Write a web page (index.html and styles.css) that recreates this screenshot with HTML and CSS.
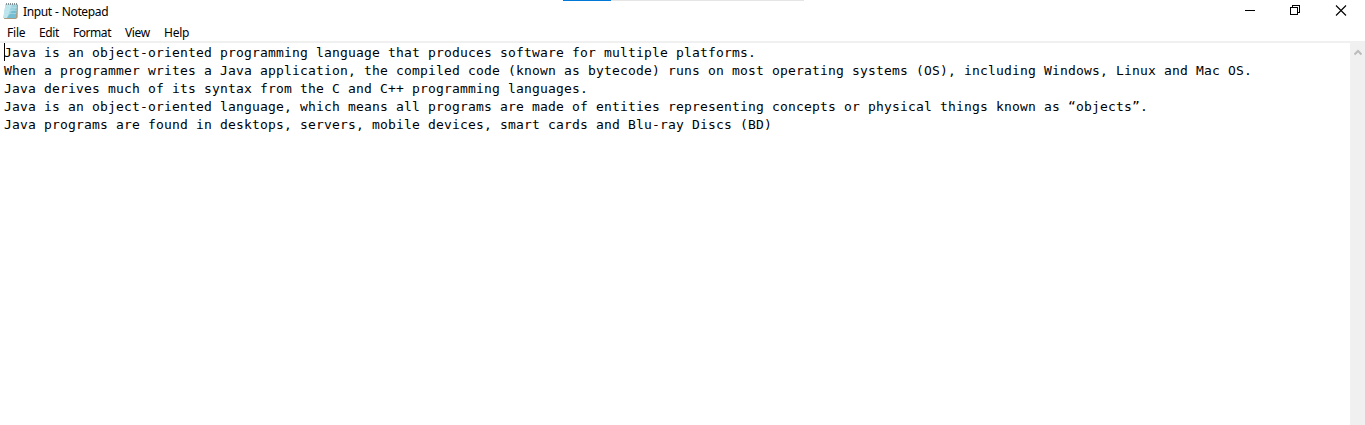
FILE: index.html
```html
<!DOCTYPE html>
<html lang="en">
<head>
<meta charset="utf-8">
<title>Input - Notepad</title>
<link rel="stylesheet" href="styles.css">
</head>
<body>
<div class="window">
  <div class="progress"><div class="progress-fill"></div></div>
  <header class="titlebar">
    <svg class="app-icon" width="16" height="18" viewBox="0 0 16 18">
      <path d="M4 2.5H15L14.6 15.5L13 17H1Z" fill="#a99a80"/>
      <path d="M2.5 2.5H14L12.8 16H.3Z" fill="#9bd3e1"/>
      <path d="M2.5 2.5H9L4 16H.3Z" fill="#c0e6ed"/>
      <path d="M9 9L13.4 7L12.8 16H4Z" fill="#74bdd3"/>
      <path d="M2.4 5.5H13.7M2 8.5H13.4M1.3 11.5H13" stroke="#b8e0e9" stroke-width=".6"/>
      <path d="M2.5 2.5H14.5" stroke="#d3dddf" stroke-width="1"/>
      <path d="M3.5 1V3M5.5 1V3M7.5 1V3M9.5 1V3M11.5 1V3M13.5 1V3" stroke="#69777b" stroke-width=".8"/>
    </svg>
    <span class="title">Input - Notepad</span>
    <svg class="controls" width="104" height="12" viewBox="0 0 104 12" fill="none" stroke="#000">
      <path d="M0 5.5H10" shape-rendering="crispEdges"/>
      <path d="M45.5 2.5H52.5V9.5H45.5ZM47.5 2.5V.5H54.5V7.5H52.5" shape-rendering="crispEdges"/>
      <path d="M91 .5L101 10.5M101 .5L91 10.5" stroke-width="1.1"/>
    </svg>
  </header>
  <nav class="menu">
    <span class="file">File</span><span class="edit">Edit</span><span class="format">Format</span><span class="view">View</span><span class="help">Help</span>
  </nav>
  <main class="editor">
    <div class="text"><span class="caret"></span>Java is an object-oriented programming language that produces software for multiple platforms.
When a programmer writes a Java application, the compiled code (known as bytecode) runs on most operating systems (OS), including Windows, Linux and Mac OS.
Java derives much of its syntax from the C and C++ programming languages.
Java is an object-oriented language, which means all programs are made of entities representing concepts or physical things known as “objects”.
Java programs are found in desktops, servers, mobile devices, smart cards and Blu-ray Discs (BD)</div>
    <aside class="scrollbar">
      <svg width="8" height="7" viewBox="0 0 8 7"><path d="M.5 5.5L4 2L7.5 5.5" fill="none" stroke="#bcbcbc" stroke-width="2"/></svg>
    </aside>
  </main>
</div>
</body>
</html>
```
FILE: styles.css
```css
* { box-sizing: border-box; }
body { margin: 0; background: #fff; color: #000; overflow: hidden; }
.window { position: relative; display: flex; flex-direction: column; height: 425px; }
.progress { position: absolute; top: 0; left: 563px; width: 241px; height: 1px; background: #e5e5e5; }
.progress-fill { width: 48px; height: 1px; background: #0078d7; }
.titlebar { display: flex; align-items: flex-start; height: 23px; padding: 2px 16px 0 3px; font: 12px/18px "Noto Sans", "Open Sans", sans-serif; }
.title { margin: 1px 0 0 4px; letter-spacing: -0.37px; word-spacing: 0.5px; white-space: nowrap; }
.controls { margin: 3px 0 0 auto; }
.menu { display: flex; gap: 14px; height: 18px; padding-left: 7px; font: 12px/19px "Noto Sans", "Open Sans", sans-serif; white-space: nowrap; }
.file { width: 18px; letter-spacing: -0.2px; }
.edit { width: 20px; letter-spacing: -0.35px; }
.format { width: 38px; letter-spacing: -0.45px; }
.view { width: 25px; letter-spacing: -0.35px; }
.help { width: 25px; letter-spacing: -0.25px; }
.editor { display: flex; flex: 1; border-top: 2px solid #f0f0f0; }
.text { position: relative; flex: 1; padding: 1px 0 0 4px; font: 13px/18px "DejaVu Sans Mono", monospace; letter-spacing: 0.174px; white-space: pre; }
.caret { position: absolute; left: 4px; top: 0; width: 1px; height: 18px; background: #000; }
.scrollbar { display: flex; flex-direction: column; align-items: center; width: 15px; padding-top: 6px; background: #f0f0f0; }
```
